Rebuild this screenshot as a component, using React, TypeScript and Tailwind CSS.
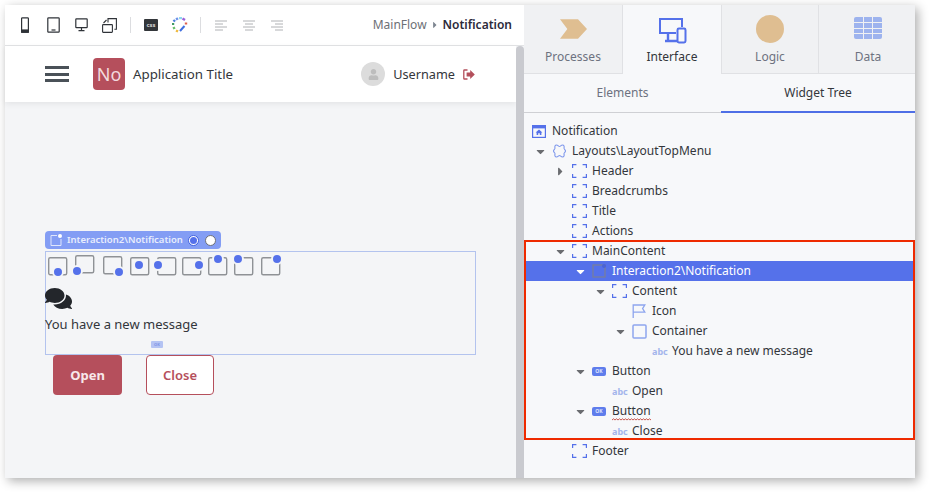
import React from 'react';
import { FaComments, FaUser, FaCaretDown, FaCaretRight } from 'react-icons/fa';

const BLUE = '#5571ea';

const PhoneIcon = () => (
  <svg width="10" height="16" viewBox="0 0 10 16" fill="none" stroke="#2f3338" strokeWidth="1.2">
    <rect x="1.6" y="0.8" width="6.8" height="14.4" rx="0.8" />
    <rect x="1.6" y="13" width="6.8" height="2.2" fill="#2f3338" />
  </svg>
);

const TabletIcon = () => (
  <svg width="13" height="16" viewBox="0 0 13 16" fill="none" stroke="#2f3338" strokeWidth="1.2">
    <rect x="0.8" y="0.8" width="11.4" height="14.4" rx="0.8" />
    <path d="M4.5 13h4" />
  </svg>
);

const DesktopIcon = () => (
  <svg width="13" height="14" viewBox="0 0 13 14" fill="none" stroke="#2f3338" strokeWidth="1.2">
    <rect x="0.8" y="0.8" width="11.4" height="8.8" rx="0.6" />
    <path d="M6.5 9.6v2.6M3.5 12.6h6" />
  </svg>
);

const RotateIcon = () => (
  <svg width="15" height="15" viewBox="0 0 15 15" fill="none" stroke="#2f3338" strokeWidth="1.1">
    <rect x="0.6" y="6.6" width="9.8" height="7.8" rx="0.6" />
    <path d="M6 4.5V0.6h8.4v10.6h-2" />
    <path d="M1.5 5 4.5 2" />
  </svg>
);

const CssIcon = () => (
  <div className="flex h-[12px] w-[14px] items-center justify-center rounded-[1px] bg-[#33363a] text-[6px] font-bold leading-none text-[#d6d6d6]">
    css
  </div>
);

const WheelIcon = () => (
  <svg width="16" height="16" viewBox="0 0 16 16" fill="none" strokeWidth="2.4">
    <path d="M4 2.5 6 1.2" stroke="#6e93ea" />
    <path d="M7 1h3" stroke="#8fd8f0" />
    <path d="M10.5 1.5l2.5 1.5" stroke="#9a63d8" />
    <path d="M14 5.5v2" stroke="#e0604c" />
    <path d="M12.5 9 8 14" stroke="#3f6fe0" strokeWidth="2" />
    <path d="M6 14.5 4 13.5" stroke="#f0b93c" />
    <path d="M2.5 12 1.5 10" stroke="#67c06a" />
    <path d="M1 8V6" stroke="#3f9a63" />
    <path d="M1.5 4.5 3 3" stroke="#4a7fd8" />
  </svg>
);

const AlignIcon = ({ lines }: { lines: string[] }) => (
  <svg width="12" height="11" viewBox="0 0 12 11" fill="none" stroke="#b0b2b5" strokeWidth="1">
    {lines.map((d) => (
      <path key={d} d={d} />
    ))}
  </svg>
);

const Chevron = ({ className }: { className: string }) => (
  <svg className={className} viewBox="0 0 33 24" fill="currentColor">
    <path d="M0 0h22l11 12-11 12H0l9-12z" />
  </svg>
);

const InterfaceIcon = () => (
  <svg width="29" height="27" viewBox="0 0 29 27" fill="none" stroke={BLUE} strokeWidth="2">
    <path d="M18 16H2V2h22v8" />
    <path d="M10 17v6M7 24h12" strokeWidth="2.4" />
    <rect x="19.5" y="11.5" width="8" height="14" rx="1.4" />
  </svg>
);

const GridIcon = () => (
  <div className="grid grid-cols-3 gap-[1px] overflow-hidden rounded-[2px]">
    {Array.from({ length: 12 }).map((_, i) => (
      <div key={i} className="h-[4.8px] w-[8.7px] bg-[#9db3ee]" />
    ))}
  </div>
);

const PageIcon = () => (
  <svg width="14" height="13" viewBox="0 0 14 13" fill="none">
    <rect x="0.6" y="0.6" width="12.8" height="11.8" stroke={BLUE} strokeWidth="1.2" />
    <path d="M1 1h12v2.4H1z" fill={BLUE} />
    <path d="M7 4.4 10.4 7.4H9.4V10H7.8V8.2H6.2V10H4.6V7.4H3.6z" fill={BLUE} />
  </svg>
);

const LayoutIcon = () => (
  <svg width="15" height="14" viewBox="0 0 15 14" fill="none" stroke="#7f98ec" strokeWidth="1.1">
    <path d="M4.5 1C6 1 6.5 2.5 7.5 2.5 8.5 2.5 9 1 10.5 1 12 1 12.5 2.5 12 4 11.7 5 13.5 5.5 13.5 7 13.5 8.5 11.7 9 12 10 12.5 11.5 12 13 10.5 13 9 13 8.5 11.5 7.5 11.5 6.5 11.5 6 13 4.5 13 3 13 2.5 11.5 3 10 3.3 9 1.5 8.5 1.5 7 1.5 5.5 3.3 5 3 4 2.5 2.5 3 1 4.5 1Z" />
  </svg>
);

const PlaceholderIcon = () => (
  <svg width="15" height="14" viewBox="0 0 15 14" fill="none" stroke={BLUE} strokeWidth="1.2">
    <path d="M0.6 4V0.6H4.4M10.6 0.6h3.8V4M14.4 10v3.4h-3.8M4.4 13.4H0.6V10" />
  </svg>
);

const BlockIcon = () => (
  <svg width="14" height="14" viewBox="0 0 14 14" fill="none">
    <rect x="1" y="1" width="12" height="12" stroke="#7a7f96" strokeWidth="1.2" />
    <circle cx="12" cy="2" r="2" fill="#4a63d6" />
  </svg>
);

const FlagIcon = () => (
  <svg width="14" height="14" viewBox="0 0 14 14" fill="none" stroke="#8ea5ee" strokeWidth="1.3">
    <path d="M1.2 14V1h11.6l-2.2 3.6 2.2 3.6H1.2" />
  </svg>
);

const ContainerIcon = () => (
  <svg width="15" height="15" viewBox="0 0 15 15" fill="none">
    <rect x="1" y="1" width="13" height="13" rx="1" stroke="#8ea5ee" strokeWidth="1.5" />
  </svg>
);

const AbcIcon = () => (
  <span className="w-[16px] text-[9px] font-bold leading-none text-[#a3b5ec]">abc</span>
);

const OkIcon = () => (
  <div className="flex h-[9px] w-[14px] items-center justify-center rounded-[2px] bg-[#5f7dec] text-[5px] font-bold leading-none text-[#dfe5fb]">
    OK
  </div>
);

const SignOutIcon = () => (
  <svg width="12" height="11" viewBox="0 0 12 11" fill="none">
    <path d="M4.5 1H1.4C1 1 .8 1.2.8 1.6v7.8c0 .4.2.6.6.6h3.1" stroke="#b34f5b" strokeWidth="1.3" />
    <path d="M3.6 3.6h3.6V1l4.6 4.5L7.2 10V7.4H3.6z" fill="#b34f5b" />
  </svg>
);

// boxes are 19x18, the gap in the outline comes from the ring around the dot
const placements = [
  { x: 0, y: 4, cx: 10, cy: 19 },
  { x: 1, y: 2, cx: 3, cy: 18 },
  { x: 3, y: 3, cx: 19, cy: 19 },
  { x: 4, y: 4, cx: 13, cy: 12 },
  { x: 5, y: 4, cx: 6, cy: 12 },
  { x: 4, y: 4, cx: 21, cy: 12 },
  { x: 4, y: 4, cx: 14, cy: 6 },
  { x: 4, y: 4, cx: 8, cy: 6 },
  { x: 5, y: 4, cx: 21, cy: 6 },
];

const PlacementIcon = ({ x, y, cx, cy }: { x: number; y: number; cx: number; cy: number }) => (
  <svg width="26" height="24" viewBox="0 0 26 24" fill="none" className="overflow-visible">
    <rect x={x + 0.7} y={y + 0.7} width="18" height="17" rx="1.5" stroke="#8f9296" strokeWidth="1.4" />
    <circle cx={cx} cy={cy} r="5" fill={BLUE} stroke="#f4f5f7" strokeWidth="2" />
  </svg>
);

type TreeRow = {
  level: number;
  label: string;
  icon: React.ReactNode;
  arrow?: 'down' | 'right';
  selected?: boolean;
  squiggle?: boolean;
};

const rows: TreeRow[] = [
  { level: 0, label: 'Notification', icon: <PageIcon /> },
  { level: 1, label: 'Layouts\\LayoutTopMenu', icon: <LayoutIcon />, arrow: 'down' },
  { level: 2, label: 'Header', icon: <PlaceholderIcon />, arrow: 'right' },
  { level: 2, label: 'Breadcrumbs', icon: <PlaceholderIcon /> },
  { level: 2, label: 'Title', icon: <PlaceholderIcon /> },
  { level: 2, label: 'Actions', icon: <PlaceholderIcon /> },
  { level: 2, label: 'MainContent', icon: <PlaceholderIcon />, arrow: 'down' },
  { level: 3, label: 'Interaction2\\Notification', icon: <BlockIcon />, arrow: 'down', selected: true },
  { level: 4, label: 'Content', icon: <PlaceholderIcon />, arrow: 'down' },
  { level: 5, label: 'Icon', icon: <FlagIcon /> },
  { level: 5, label: 'Container', icon: <ContainerIcon />, arrow: 'down' },
  { level: 6, label: 'You have a new message', icon: <AbcIcon /> },
  { level: 3, label: 'Button', icon: <OkIcon />, arrow: 'down' },
  { level: 4, label: 'Open', icon: <AbcIcon /> },
  { level: 3, label: 'Button', icon: <OkIcon />, arrow: 'down', squiggle: true },
  { level: 4, label: 'Close', icon: <AbcIcon /> },
  { level: 2, label: 'Footer', icon: <PlaceholderIcon /> },
];

const Row = ({ row }: { row: TreeRow }) => (
  <div className={`flex h-5 items-center pl-2 text-[12px] ${row.selected ? 'bg-[#5571ea] text-white' : 'text-[#33363b]'}`}>
    {Array.from({ length: row.level }).map((_, i) => {
      const last = i === row.level - 1;
      return (
        <div key={i} className="flex w-5 shrink-0 items-center justify-center pr-1">
          {last && row.arrow === 'down' && (
            <FaCaretDown size={13} className={row.selected ? 'text-white' : 'text-[#6a6c70]'} />
          )}
          {last && row.arrow === 'right' && <FaCaretRight size={13} className="text-[#6a6c70]" />}
        </div>
      );
    })}
    <div className="flex w-5 shrink-0 items-center">{row.icon}</div>
    <span className="relative whitespace-nowrap">
      {row.label}
      {row.squiggle && (
        <svg className="absolute left-0 top-[16px]" width="39" height="3" viewBox="0 0 39 3" fill="none" stroke="#c2453c" strokeWidth="0.9">
          <path d="M0 2 1.5 .8 3 2 4.5 .8 6 2 7.5 .8 9 2 10.5 .8 12 2 13.5 .8 15 2 16.5 .8 18 2 19.5 .8 21 2 22.5 .8 24 2 25.5 .8 27 2 28.5 .8 30 2 31.5 .8 33 2 34.5 .8 36 2 37.5 .8 39 2" />
        </svg>
      )}
    </span>
  </div>
);

export default function App() {
  return (
    <div className="h-[493px] w-[930px] overflow-hidden bg-white pl-[5px] pt-[5px] font-['Noto_Sans',sans-serif]">
      <div className="flex h-[473px] w-[910px] shadow-[3px_3px_10px_rgba(0,0,0,0.32)]">
        {/* editor pane */}
        <div className="flex w-[519px] flex-col bg-[#f4f5f7]">
          <div className="flex h-[41px] shrink-0 items-center border-b border-[#e2e3e5] bg-white">
            <div className="flex items-center">
              <div className="ml-[15px] flex w-[10px] justify-center"><PhoneIcon /></div>
              <div className="ml-[17px] flex w-[13px] justify-center"><TabletIcon /></div>
              <div className="ml-[15px] flex w-[13px] justify-center"><DesktopIcon /></div>
              <div className="ml-[14px] flex w-[15px] justify-center"><RotateIcon /></div>
              <div className="ml-[13px] h-4 w-px bg-[#dcdde0]" />
              <div className="ml-[13px]"><CssIcon /></div>
              <div className="ml-[14px]"><WheelIcon /></div>
              <div className="ml-[12px] h-4 w-px bg-[#dcdde0]" />
              <div className="ml-[14px] flex"><AlignIcon lines={['M0 1h12', 'M0 4h8', 'M0 7h12', 'M0 10h8']} /></div>
              <div className="ml-[16px] flex"><AlignIcon lines={['M0 1h12', 'M2 4h8', 'M0 7h12', 'M2 10h8']} /></div>
              <div className="ml-[16px] flex"><AlignIcon lines={['M0 1h12', 'M4 4h8', 'M0 7h12', 'M4 10h8']} /></div>
            </div>
            <div className="ml-auto mr-[12px] flex items-center text-[12px]">
              <span className="text-[#6d7076]">MainFlow</span>
              <FaCaretRight size={10} className="mx-[3px] text-[#7d8590]" />
              <span className="font-semibold text-[#2b2a3a]">Notification</span>
            </div>
          </div>

          <div className="flex min-h-0 flex-1">
            <div className="min-w-0 flex-1">
              <div className="flex h-14 items-center bg-white pl-10 shadow-[0_2px_6px_rgba(0,0,0,0.07)]">
                <div className="flex w-6 flex-col gap-[3.5px]">
                  <div className="h-[3px] bg-[#4a5158]" />
                  <div className="h-[3px] bg-[#4a5158]" />
                  <div className="h-[3px] bg-[#4a5158]" />
                </div>
                <div className="ml-6 flex h-8 w-8 items-center justify-center rounded-[4px] bg-[#b54f5c] text-[18px] text-[#f3dadd]">
                  No
                </div>
                <span className="ml-2 pt-[2px] text-[13.3px] text-[#33363b]">Application Title</span>
                <div className="ml-auto flex items-center pr-[41px]">
                  <div className="flex h-6 w-6 items-center justify-center rounded-full bg-[#dcdcdc]">
                    <FaUser size={11} className="text-[#bdbdbd]" />
                  </div>
                  <span className="ml-2 pt-[2px] text-[12.7px] text-[#33363b]">Username</span>
                  <div className="ml-2 flex"><SignOutIcon /></div>
                </div>
              </div>

              <div className="pl-10 pt-[129px]">
                <div className="flex h-[18px] w-[176px] items-center rounded-[4px] bg-[#839df4] pl-[5px] text-[9.5px] font-semibold text-[#e8edfd]">
                  <svg width="12" height="12" viewBox="0 0 12 12" fill="none" className="mr-[5px] shrink-0">
                    <path d="M7 1.5H1v10h10V5" stroke="#dfe6fc" strokeWidth="1" />
                    <circle cx="10" cy="2" r="2" fill="#fff" />
                  </svg>
                  Interaction2\Notification
                  <div className="ml-[5px] flex h-[11px] w-[11px] items-center justify-center rounded-full border border-[#3f5fe0] bg-white">
                    <div className="h-[7px] w-[7px] rounded-full bg-[#5571ea]" />
                  </div>
                  <div className="ml-[6px] h-[11px] w-[11px] rounded-full border border-[#6e7078] bg-white" />
                </div>
                <div className="relative mt-[2px] h-[104px] w-[431px] border border-[#b3c3ee]">
                  <div className="flex pl-[2px] pt-[1px]">
                    {placements.map((p, i) => (
                      <PlacementIcon key={i} {...p} />
                    ))}
                  </div>
                  <FaComments size={27} className="-ml-px mt-[8px] text-[#23262b]" />
                  <div className="-ml-px mt-[2px] text-[13px] leading-5 text-[#33363b]">You have a new message</div>
                  <div className="absolute bottom-[6px] left-[105px] flex h-[7px] w-[12px] items-center justify-center rounded-[1px] bg-[#b4c3f3] text-[4px] font-bold leading-none text-[#7f95e6]">
                    OK
                  </div>
                </div>
                <div className="ml-2 flex gap-6">
                  <button className="h-10 w-[69px] rounded-[4px] bg-[#b54f5c] pt-[2px] text-[13px] font-bold text-[#f8e8ea]">Open</button>
                  <button className="h-10 w-[68px] rounded-[4px] border border-[#b54f5c] bg-white pt-[2px] text-[13px] font-semibold text-[#b54f5c]">Close</button>
                </div>
              </div>
            </div>
            <div className="w-2 shrink-0 rounded-t-[4px] bg-[#c9cacf]" />
          </div>
        </div>

        {/* right side panel */}
        <div className="w-[391px] bg-[#f7f8fa]">
          <div className="flex h-[69px] text-[12px]">
            <div className="flex w-[99px] flex-col items-center border-b border-r border-[#e0e1e4] bg-[#f0f1f3] pt-3 text-[#6d7280]">
              <Chevron className="h-6 w-[27px] text-[#dfbe91]" />
              <span className="mt-[7px]">Processes</span>
            </div>
            <div className="flex w-[98px] flex-col items-center pt-3 text-[#33363b]">
              <InterfaceIcon />
              <span className="mt-[4px]">Interface</span>
            </div>
            <div className="flex w-[98px] flex-col items-center border-b border-l border-r border-[#e0e1e4] bg-[#f0f1f3] pt-[10px] text-[#6d7280]">
              <div className="h-7 w-7 rounded-full bg-[#dfbe91]" />
              <span className="mt-[5px]">Logic</span>
            </div>
            <div className="flex flex-1 flex-col items-center border-b border-[#e0e1e4] bg-[#f0f1f3] pl-[2px] pt-3 text-[#6d7280]">
              <GridIcon />
              <span className="mt-[9px]">Data</span>
            </div>
          </div>
          <div className="flex h-[39px] text-[12px]">
            <div className="flex w-[197px] items-center justify-center border-b border-[#cfd0d4] text-[#6d7280]">Elements</div>
            <div className="flex flex-1 items-center justify-center border-b-2 border-[#4f6fe6] text-[#33363b]">Widget Tree</div>
          </div>
          <div className="relative h-[365px] pt-2">
            {rows.map((row, i) => (
              <Row key={i} row={row} />
            ))}
            <div className="absolute left-0 right-0 top-[127px] h-[200px] border-2 border-[#ee2a00]" />
          </div>
        </div>
      </div>
    </div>
  );
}
